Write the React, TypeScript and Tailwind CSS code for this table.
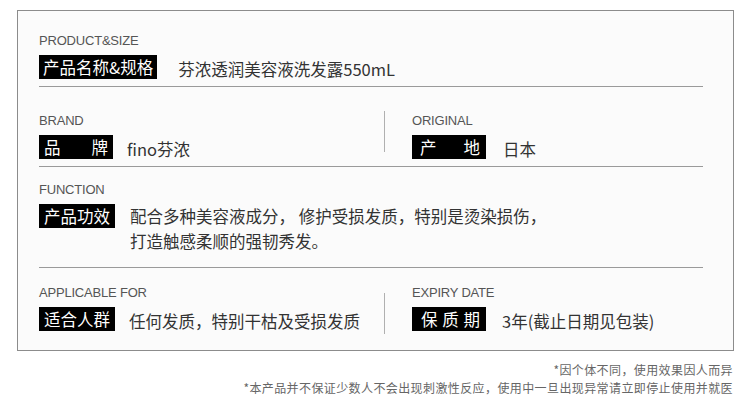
const cjk = "font-['Noto_Sans_CJK_SC','Noto_Sans',sans-serif]";

function Label({ children }: { children: string }) {
    return (
        <div className="font-['Liberation_Sans',Arial,sans-serif] text-[13px] leading-[16px] text-[#555] tracking-[-0.2px]">
            {children}
        </div>
    );
}

function Badge({ children, className = "" }: { children: React.ReactNode; className?: string }) {
    return (
        <div
            className={`flex items-center h-[24px] bg-black text-white text-[16.5px] leading-[24px] shrink-0 ${className}`}
        >
            {children}
        </div>
    );
}

export default function App() {
    return (
        <div className={`w-[750px] h-[403px] bg-white pt-[10px] pl-[17px] ${cjk}`}>
            <div className="w-[717px] h-[341px] border border-[#8c8c8c] bg-[#fbfbfb] pl-[21px] pr-[30px]">
                {/* product & size */}
                <div className="pt-[22px] pb-[7px] border-b border-[#9a9a9a]">
                    <Label>PRODUCT&amp;SIZE</Label>
                    <div className="flex items-center mt-[6px]">
                        <Badge className="px-[4px]">产品名称&amp;规格</Badge>
                        <div className="ml-[21px] text-[16.5px] leading-[20px] mt-[4px] text-[#333]">
                            芬浓透润美容液洗发露550mL
                        </div>
                    </div>
                </div>

                {/* brand / original */}
                <div className="flex pt-[26px] pb-[7px] border-b border-[#9a9a9a]">
                    <div className="w-[345px]">
                        <Label>BRAND</Label>
                        <div className="flex items-center mt-[6px]">
                            <Badge className="w-[74px] px-[5px] justify-between">
                                <span>品</span>
                                <span>牌</span>
                            </Badge>
                            <div className="ml-[14px] text-[16.5px] leading-[20px] mt-[4px] text-[#333]">fino芬浓</div>
                        </div>
                    </div>
                    <div className="w-px h-[41px] bg-[#b0b0b0] mt-[-2px]" />
                    <div className="ml-[27px]">
                        <Label>ORIGINAL</Label>
                        <div className="flex items-center mt-[6px]">
                            <Badge className="w-[74px] pl-[8px] pr-[6px] justify-between">
                                <span>产</span>
                                <span>地</span>
                            </Badge>
                            <div className="ml-[17px] text-[16.5px] leading-[20px] mt-[4px] text-[#333]">日本</div>
                        </div>
                    </div>
                </div>

                {/* function */}
                <div className="pt-[15px] pb-[13px] border-b border-[#9a9a9a]">
                    <Label>FUNCTION</Label>
                    <div className="flex items-start mt-[6px]">
                        <Badge className="px-[5px]">产品功效</Badge>
                        <div className="ml-[15px] text-[16.5px] leading-[25px] text-[#333]">
                            配合多种美容液成分， 修护受损发质，特别是烫染损伤，
                            <br />
                            打造触感柔顺的强韧秀发。
                        </div>
                    </div>
                </div>

                {/* applicable / expiry */}
                <div className="flex pt-[17px]">
                    <div className="w-[345px]">
                        <Label>APPLICABLE FOR</Label>
                        <div className="flex items-center mt-[6px]">
                            <Badge className="px-[5px]">适合人群</Badge>
                            <div className="ml-[14px] text-[16.5px] leading-[20px] mt-[4px] text-[#333]">
                                任何发质，特别干枯及受损发质
                            </div>
                        </div>
                    </div>
                    <div className="w-px h-[41px] bg-[#b0b0b0] mt-[8px]" />
                    <div className="ml-[27px]">
                        <Label>EXPIRY DATE</Label>
                        <div className="flex items-center mt-[6px]">
                            <Badge className="w-[74px] pl-[9px] pr-[6px] justify-between">
                                <span>保</span>
                                <span>质</span>
                                <span>期</span>
                            </Badge>
                            <div className="ml-[16px] text-[16.5px] leading-[20px] mt-[4px] text-[#333]">
                                3年(截止日期见包装)
                            </div>
                        </div>
                    </div>
                </div>
            </div>

            <div className="pr-[17px] mt-[10px] text-right text-[12px] leading-[18px] tracking-[0.4px] text-[#666]">
                <div>*因个体不同，使用效果因人而异</div>
                <div>*本产品并不保证少数人不会出现刺激性反应，使用中一旦出现异常请立即停止使用并就医</div>
            </div>
        </div>
    );
}
